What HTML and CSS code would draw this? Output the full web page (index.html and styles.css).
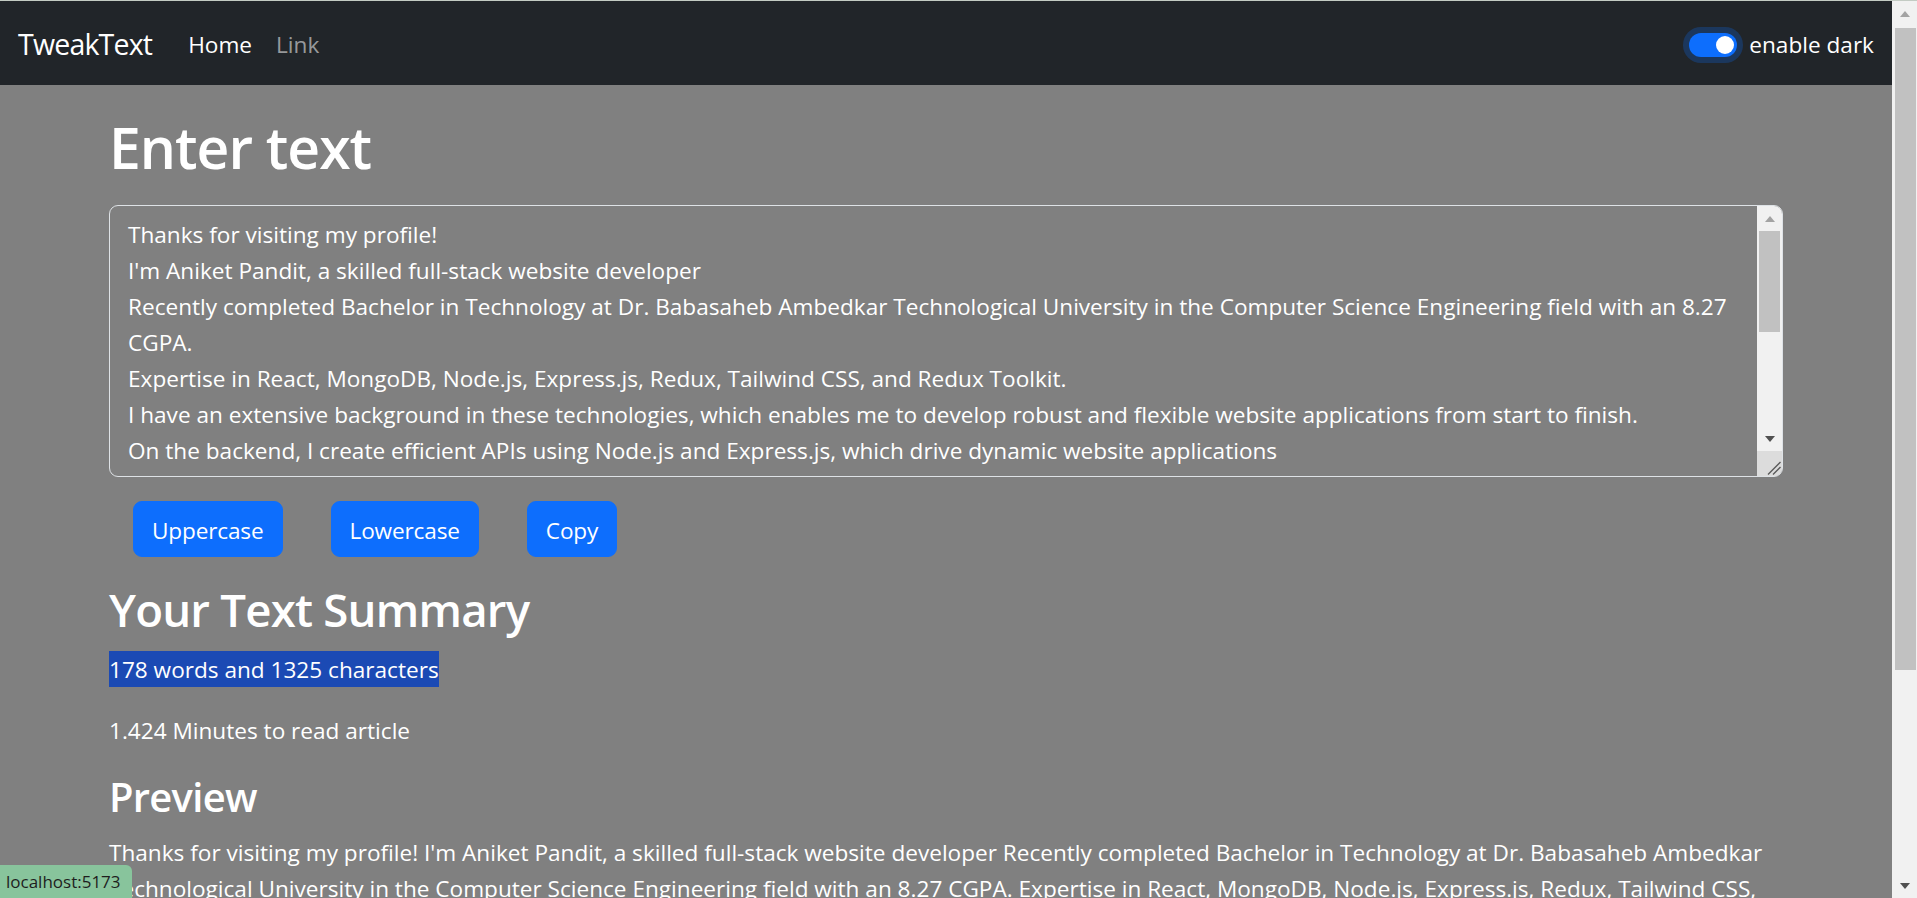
FILE: index.html
```html
<!DOCTYPE html>
<html lang="en">
<head>
<meta charset="utf-8">
<title>TweakText</title>
<link rel="stylesheet" href="styles.css">
</head>
<body>
<div class="topline"></div>
<div class="frame">
  <div class="viewport">
    <nav class="navbar">
      <a class="brand" href="#">TweakText</a>
      <ul class="nav">
        <li><a class="nav-link active" href="#">Home</a></li>
        <li><a class="nav-link" href="#">Link</a></li>
      </ul>
      <div class="switch">
        <span class="toggle"><span class="knob"></span></span>
        <label class="switch-label">enable dark</label>
      </div>
    </nav>

    <main class="container">
      <h1>Enter text</h1>
      <div class="textbox">
        <textarea class="ta" rows="7" spellcheck="false">Thanks for visiting my profile!
I'm Aniket Pandit, a skilled full-stack website developer
Recently completed Bachelor in Technology at Dr. Babasaheb Ambedkar Technological University in the Computer Science Engineering field with an 8.27 CGPA.
Expertise in React, MongoDB, Node.js, Express.js, Redux, Tailwind CSS, and Redux Toolkit.
I have an extensive background in these technologies, which enables me to develop robust and flexible website applications from start to finish.
On the backend, I create efficient APIs using Node.js and Express.js, which drive dynamic website applications
On the frontend, I build responsive and intuitive user interfaces using React, Redux and Tailwind CSS.
I use MongoDB to design scalable databases that keep data secure and easy to manage.
I enjoy solving problems, learning new tools and collaborating with teams to deliver quality products.
Let's connect and build something great together!</textarea>
        <div class="sbar">
          <div class="sbtn"><span class="arrow-up"></span></div>
          <div class="strack"><div class="sthumb"></div></div>
          <div class="sbtn"><span class="arrow-down"></span></div>
          <div class="resizer">
            <svg width="25" height="25" viewBox="0 0 25 25"><path d="M11 23.5 L23.5 11 M16 23.5 L23.5 16" stroke="#5a5a5a" stroke-width="1.4" fill="none"/></svg>
          </div>
        </div>
      </div>
      <div class="actions">
        <button class="btn">Uppercase</button>
        <button class="btn">Lowercase</button>
        <button class="btn">Copy</button>
      </div>

      <h2>Your Text Summary</h2>
      <p><span class="hl">178 words and 1325 characters</span></p>
      <p class="shifted">1.424 Minutes to read article</p>
      <h3>Preview</h3>
      <p class="shifted">Thanks for visiting my profile! I'm Aniket Pandit, a skilled full-stack website developer Recently completed Bachelor in Technology at Dr. Babasaheb Ambedkar Technological University in the Computer Science Engineering field with an 8.27 CGPA. Expertise in React, MongoDB, Node.js, Express.js, Redux, Tailwind CSS, and Redux Toolkit. I have an extensive background in these technologies, which enables me to develop robust and flexible website applications from start to finish. On the backend, I create efficient APIs using Node.js and Express.js, which drive dynamic website applications On the frontend, I build responsive and intuitive user interfaces using React, Redux and Tailwind CSS. I use MongoDB to design scalable databases that keep data secure and easy to manage. I enjoy solving problems, learning new tools and collaborating with teams to deliver quality products. Let's connect and build something great together!</p>
    </main>
  </div>

  <div class="pagebar">
    <div class="sbtn"><span class="arrow-up"></span></div>
    <div class="pthumb"></div>
    <div class="ptrack"></div>
    <div class="sbtn"><span class="arrow-down"></span></div>
  </div>
</div>

<div class="status">localhost:5173</div>
</body>
</html>
```

FILE: styles.css
```css
* { box-sizing: border-box; }

html, body {
  margin: 0;
  height: 100%;
}

body {
  display: flex;
  flex-direction: column;
  overflow: hidden;
  font-family: "Open Sans", "Liberation Sans", sans-serif;
  font-size: 22.6px;
  line-height: 36px;
  background: #808080;
  color: #fff;
}

.topline {
  height: 1px;
  background: #c3cbc3;
  flex: none;
}

.frame {
  flex: 1;
  display: flex;
  min-height: 0;
}

.viewport {
  flex: 1;
  min-width: 0;
  overflow: hidden;
}

/* navbar */
.navbar {
  height: 84px;
  background: #212529;
  display: flex;
  align-items: center;
  padding: 14px 18px 10px;
}

.brand {
  font-size: 28.5px;
  line-height: 45px;
  letter-spacing: -0.8px;
  padding: 7px 0 8px;
  margin-right: 24px;
  color: #fff;
  text-decoration: none;
}

.nav {
  display: flex;
  list-style: none;
  margin: 0;
  padding: 0;
  flex: 1;
}

.nav-link {
  display: block;
  padding: 12px;
  font-size: 22.6px;
  line-height: 36px;
  color: rgba(255, 255, 255, 0.55);
  text-decoration: none;
}

.nav-link.active { color: #fff; }

.switch {
  display: flex;
  align-items: center;
  gap: 12px;
}

.toggle {
  width: 48px;
  height: 24px;
  border-radius: 12px;
  background: #0d6efd;
  box-shadow: 0 0 0 6px rgba(13, 110, 253, 0.25);
  display: flex;
  align-items: center;
  justify-content: flex-end;
  padding: 0 3px;
}

.knob {
  width: 18px;
  height: 18px;
  border-radius: 50%;
  background: #fff;
}

.switch-label {
  font-size: 22.6px;
  line-height: 36px;
  color: #fff;
}

/* main */
.container {
  width: 1710px;
  max-width: 100%;
  margin: 26px auto 0;
  padding: 0 18px;
}

h1 {
  font-size: 57px;
  font-weight: 600;
  line-height: 72px;
  letter-spacing: -1px;
  margin: 0 0 22px;
}

h2 {
  font-size: 45.6px;
  font-weight: 600;
  line-height: 57.6px;
  letter-spacing: -0.8px;
  margin: 0 0 12px;
}

h3 {
  font-size: 39.9px;
  font-weight: 600;
  line-height: 50.4px;
  letter-spacing: -0.7px;
  margin: 0 0 12px;
}

p { margin: 0 0 24px; }

p.shifted {
  padding-top: 1px;
  margin-bottom: 23px;
}

.hl {
  display: inline-block;
  background: #1b4ab4;
  padding-top: 1px;
  line-height: 35px;
}

/* textarea */
.textbox {
  display: flex;
  height: 272px;
  border: 1px solid #dee2e6;
  border-radius: 9px;
  overflow: hidden;
  margin-bottom: 24px;
}

.ta {
  flex: 1;
  min-width: 0;
  border: none;
  outline: none;
  resize: none;
  overflow: hidden;
  background: transparent;
  color: #fff;
  padding: 10.5px 18px 7.5px;
  font-family: inherit;
  font-size: 22.6px;
  line-height: 36px;
}

.sbar {
  width: 25px;
  flex: none;
  display: flex;
  flex-direction: column;
  background: #f1f1f1;
}

.sbtn {
  height: 25px;
  flex: none;
  display: flex;
  align-items: center;
  justify-content: center;
}

.arrow-up {
  width: 0;
  height: 0;
  border-left: 5.5px solid transparent;
  border-right: 5.5px solid transparent;
  border-bottom: 6px solid #a3a3a3;
}

.arrow-down {
  width: 0;
  height: 0;
  border-left: 5.5px solid transparent;
  border-right: 5.5px solid transparent;
  border-top: 6px solid #505050;
}

.strack {
  flex: 1;
  padding: 0 2px;
}

.sthumb {
  height: 101px;
  background: #c1c1c1;
}

.resizer {
  height: 25px;
  flex: none;
  background: #dcdcdc;
}

.resizer svg { display: block; }

/* buttons */
.actions {
  display: flex;
  margin-bottom: 24px;
}

.btn {
  margin: 0 24px;
  padding: 10.5px 18px 7.5px;
  font-family: inherit;
  font-size: 22.6px;
  line-height: 36px;
  letter-spacing: -0.15px;
  color: #fff;
  background: #0d6efd;
  border: 1px solid #0d6efd;
  border-radius: 9px;
}

/* page scrollbar */
.pagebar {
  width: 25px;
  flex: none;
  display: flex;
  flex-direction: column;
  background: #f1f1f1;
}

.pthumb {
  height: 642px;
  margin: 2px 1px 0 3px;
  background: #c1c1c1;
  flex: none;
}

.ptrack { flex: 1; }

/* browser status bubble */
.status {
  position: fixed;
  left: 0;
  bottom: 0;
  height: 33px;
  padding: 0 11px 0 6px;
  background: #88c49c;
  color: #1e1e1e;
  font-size: 17px;
  line-height: 33px;
  border-top-right-radius: 6px;
}
```
